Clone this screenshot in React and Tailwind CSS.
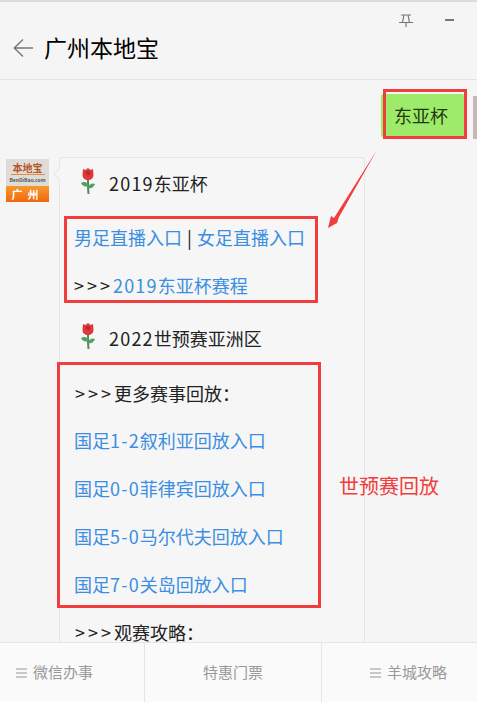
import React from 'react';

const cjk = { fontFamily: '"Noto Sans CJK SC", sans-serif' };

const Rose = () => (
  <svg width="20" height="36" viewBox="0 0 20 36" className="shrink-0">
    <path d="M10 14 C10 19 10 24 10.5 29" stroke="#4f8a5b" strokeWidth="2" fill="none" />
    <path d="M10 19 C7 16 5 17 3 18 C5 22 8 22 10 21 Z" fill="#4fa35f" />
    <path d="M10.5 21 C13 18 15 18 17 19 C15 23 13 24 10.5 23 Z" fill="#4fa35f" />
    <path d="M5 4 L7.5 5 L10 3 L12.5 5 L15 4 L15.5 10 C15.5 13 13 15 10 15 C7 15 4.5 13 4.5 10 Z" fill="#e0383a" />
    <path d="M7.5 7 C9 5.5 11.5 6 12.5 8 C11.5 11 8.5 10.5 7.5 7 Z" fill="#b32a2c" />
  </svg>
);

const MenuIcon = () => (
  <span className="flex w-[11px] flex-col gap-[2px]">
    <span className="h-[2px] bg-[#c8c8c8]" />
    <span className="h-[2px] bg-[#c8c8c8]" />
    <span className="h-[2px] bg-[#c8c8c8]" />
  </span>
);

const Logo = () => (
  <div className="flex h-[43px] w-[43px] shrink-0 flex-col overflow-hidden">
    <div className="flex h-[27px] flex-col items-center bg-[#dfdcd8]">
      <span className="mt-[2px] border-b border-[#e08a4a] px-[2px] text-[10px] leading-[13px] font-bold text-[#b9531f]">本地宝</span>
      <span className="mt-[1px] text-[5px] leading-[7px] font-bold text-[#555]">BenDiBao.com</span>
    </div>
    <div className="flex flex-1 items-center justify-center bg-gradient-to-b from-[#f79a2c] to-[#f0650a] text-[11px] leading-none font-bold tracking-[5px] text-white">广州</div>
  </div>
);

const LinkRow = ({ children, className = '' }) => (
  <div className={`text-[18px] leading-6 text-[#3b8ee0] ${className}`}>{children}</div>
);

const Arrows = () => <span className="tracking-[3px] text-[#222]">&gt;&gt;&gt;</span>;

// the digits sit a little wider in the picture than in Noto
const Num = ({ children }) => <span className="tracking-[1.2px]">{children}</span>;

const TitleRow = ({ children }) => (
  <div className="flex h-12 items-center pl-[18px] text-[18px] text-[#222]">
    <Rose />
    <span className="ml-[11px]">{children}</span>
  </div>
);

const FooterCell = ({ label, icon, className }) => (
  <div className={`flex items-center text-[15px] text-[#999] ${className}`}>
    {icon && <MenuIcon />}
    <span className={icon ? 'ml-[6px]' : ''}>{label}</span>
  </div>
);

export default function App() {
  return (
    <div className="relative flex h-[702px] w-[477px] flex-col overflow-hidden bg-[#f5f5f5]" style={cjk}>
      {/* Header */}
      <header className="relative flex h-20 shrink-0 items-center border-t-2 border-b border-t-[#dcdcdc] border-b-[#e2e2e2] pt-[14px] pl-[13px]">
        <svg width="20" height="20" viewBox="0 0 20 20" fill="none" stroke="#777" strokeWidth="1.4">
          <path d="M20 10 H1 M10 1.5 L1.2 10 L10 18.5" />
        </svg>
        <h1 className="ml-[11px] text-[23px] leading-none font-normal text-black">广州本地宝</h1>
        <svg width="14" height="13" viewBox="0 0 14 13" fill="none" stroke="#777" strokeWidth="1.2" className="absolute top-[12px] left-[399px]">
          <path d="M2 1 H12 M0 8.5 H14 M5 1 L3.5 8.5 M9 1 L10.5 8.5 M7 8.5 V13" />
        </svg>
        <span className="absolute top-[17px] left-[445px] h-[1.5px] w-[9px] bg-[#777]" />
      </header>

      {/* Chat */}
      <main className="relative min-h-0 flex-1 overflow-hidden">
        <div className="flex h-[77px] items-start justify-end pt-[9px]">
          <div className="relative mt-[5px] flex h-[43px] w-[83px] items-center rounded-[2px] bg-[#9eea6a] pl-[13px] text-[18px] text-[#1f3a10]">
            东亚杯
            <span className="absolute -top-[5px] -right-[3px] -bottom-[2px] left-[2px] border-[3px] border-[#f03d3d]" />
          </div>
          <div className="mt-[7px] ml-[9px] h-[43px] w-[4px] bg-[#c9b8b5]" />
        </div>

        <div className="flex items-start pl-[6px]">
          <div className="mt-[2px]"><Logo /></div>
          <div className="relative ml-[10px] w-[306px] rounded-t-[4px] border border-b-0 border-[#e6e6e6] bg-[#f6f6f6] pt-[1px] pb-10">
            <span className="absolute top-[12px] -left-[5px] h-2 w-2 rotate-45 border-b border-l border-[#e6e6e6] bg-[#f6f6f6]" />
            <TitleRow><Num>2019</Num>东亚杯</TitleRow>

            <div className="mt-[9px] ml-1 w-[254px] border-[3px] border-[#f03d3d] pt-[6px] pb-[3px] pl-[7px]">
              <div className="flex flex-col gap-6">
                <LinkRow>男足直播入口 <span className="mx-[1px] text-[#222]">|</span> 女足直播入口</LinkRow>
                <LinkRow><Arrows /><Num>2019</Num>东亚杯赛程</LinkRow>
              </div>
            </div>

            <div className="mt-[11px]"><TitleRow><Num>2022</Num>世预赛亚洲区</TitleRow></div>

            <div className="-ml-[3px] w-[264px] border-[3px] border-[#f03d3d] pt-4 pb-[9px] pl-[15px]">
              <div className="flex flex-col gap-6">
                <div className="text-[18px] leading-6 text-[#222]"><Arrows />更多赛事回放：</div>
                <LinkRow className="-mt-px -ml-px">国足<Num>1-2</Num>叙利亚回放入口</LinkRow>
                <LinkRow className="-ml-px">国足<Num>0-0</Num>菲律宾回放入口</LinkRow>
                <LinkRow className="-ml-px">国足<Num>5-0</Num>马尔代夫回放入口</LinkRow>
                <LinkRow className="-ml-px">国足<Num>7-0</Num>关岛回放入口</LinkRow>
              </div>
            </div>

            <div className="mt-[14px] pl-[15px] text-[18px] leading-5 text-[#222]"><Arrows />观赛攻略：</div>
          </div>
        </div>

        {/* Annotations */}
        <svg width="60" height="90" viewBox="0 0 60 90" className="absolute top-[68px] left-[325px]">
          <path d="M52 2 L14 69 L12 75 L3 80 L6 68 L9 70 Z" fill="#f03d3d" />
        </svg>
        <span className="absolute top-[392px] left-[339px] text-[20px] leading-7 text-[#f03d3d]">世预赛回放</span>
      </main>

      {/* Footer */}
      <footer className="flex h-[60px] shrink-0 border-t border-[#e5e5e5] bg-[#fafafa]">
        <FooterCell label="微信办事" icon className="w-[145px] justify-start border-r border-[#e5e5e5] pl-[16px]" />
        <FooterCell label="特惠门票" className="w-[177px] justify-center border-r border-[#e5e5e5]" />
        <FooterCell label="羊城攻略" icon className="flex-1 justify-start pl-[48px]" />
      </footer>
    </div>
  );
}
